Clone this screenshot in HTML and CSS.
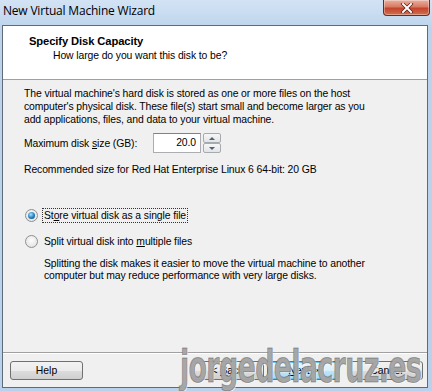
FILE: index.html
```html
<!DOCTYPE html>
<html lang="en">
<head>
  <meta charset="UTF-8">
  <title>New Virtual Machine Wizard</title>
  <link rel="stylesheet" href="styles.css">
</head>
<body>
  <div class="window">
    <div class="titlebar">
      <span class="title">New Virtual Machine Wizard</span>
      <div class="close">
        <svg width="14" height="10" viewBox="0 0 14 10">
          <path d="M3 1 L11 9 M11 1 L3 9" stroke="#5a1a10" stroke-width="3.4" stroke-linecap="square"/>
          <path d="M3 1 L11 9 M11 1 L3 9" stroke="#ffffff" stroke-width="2" stroke-linecap="square"/>
        </svg>
      </div>
    </div>
    <div class="client">
      <div class="header">
        <div class="headTitle">Specify Disk Capacity</div>
        <div class="headSub">How large do you want this disk to be?</div>
      </div>
      <div class="content">
        <p class="intro">The virtual machine's hard disk is stored as one or more files on the host computer's physical disk. These file(s) start small and become larger as you add applications, files, and data to your virtual machine.</p>
        <div class="sizeRow">
          <span class="sizeLabel">Maximum disk <u>s</u>ize (GB):</span>
          <div class="input">20.0</div>
          <div class="spin">
            <div class="spinBtn"><span class="arrUp"></span></div>
            <div class="spinBtn"><span class="arrDown"></span></div>
          </div>
        </div>
        <p class="recommend">Recommended size for Red Hat Enterprise Linux 6 64-bit: 20 GB</p>
        <div class="radioRow first">
          <span class="radio checked"></span>
          <span class="radioLabel focus">St<u>o</u>re virtual disk as a single file</span>
        </div>
        <div class="radioRow">
          <span class="radio"></span>
          <span class="radioLabel">Split virtual disk into <u>m</u>ultiple files</span>
        </div>
        <p class="note">Splitting the disk makes it easier to move the virtual machine to another computer but may reduce performance with very large disks.</p>
      </div>
      <div class="footer">
        <button class="btn help">Help</button>
        <div class="btnGroup">
          <button class="btn">&lt; <u>B</u>ack</button>
          <button class="btn default"><u>N</u>ext &gt;</button>
          <button class="btn cancel">Cancel</button>
        </div>
        <div class="watermark">jorgedelacruz.es</div>
      </div>
    </div>
  </div>
</body>
</html>
```

FILE: styles.css
```css
*{
  box-sizing: border-box;
}
body{
  margin: 0;
  width: 432px;
  height: 391px;
  overflow: hidden;
  background: #b9d1ea;
  font-family: "Liberation Sans", Arial, sans-serif;
  font-size: 10.4px;
  letter-spacing: -0.1px;
  color: #000;
}
.window{
  display: flex;
  flex-direction: column;
  height: 391px;
  background: linear-gradient(#d3e3f5, #bcd3eb 30px, #b9d1ea);
}
.titlebar{
  display: flex;
  height: 25px;
  padding-left: 3px;
}
.title{
  font-family: "Open Sans", "Liberation Sans", sans-serif;
  font-size: 12px;
  letter-spacing: -0.2px;
  line-height: 22px;
}
.close{
  margin-left: auto;
  margin-right: 2px;
  width: 47px;
  height: 16px;
  border: 1px solid #6d2b20;
  border-top: none;
  border-radius: 0 0 4px 4px;
  background: linear-gradient(#eab0a0, #d97a63 45%, #c4442b 55%, #d0704f);
  box-shadow: inset 0 0 0 1px rgba(255, 255, 255, 0.35);
  display: flex;
  align-items: center;
  justify-content: center;
}
.client{
  flex: 1;
  margin: 0 4px 3px 2px;
  border: 1px solid #5e6c7a;
  display: flex;
  flex-direction: column;
  background: #f0f0f0;
}
.header{
  height: 54px;
  background: #fff;
  border-bottom: 1px solid #a0a0a0;
  padding: 8px 0 0 26px;
}
.headTitle{
  font-weight: bold;
  font-size: 11.2px;
  line-height: 14px;
}
.headSub{
  padding-left: 24px;
  line-height: 14px;
  margin-top: 1px;
}
.content{
  flex: 1;
  padding: 7px 0 0 21px;
}
.content p{
  margin: 0;
}
.intro{
  line-height: 13px;
  width: 360px;
}
.sizeRow{
  display: flex;
  align-items: center;
  margin-top: 7px;
  height: 20px;
}
.sizeLabel{
  width: 129px;
}
.input{
  width: 48px;
  height: 20px;
  background: #fff;
  border: 1px solid #abadb3;
  border-top-color: #7f8389;
  text-align: right;
  padding-right: 4px;
  line-height: 18px;
}
.spin{
  margin-left: 2px;
  display: flex;
  flex-direction: column;
}
.spinBtn{
  width: 18px;
  height: 10px;
  border: 1px solid #a7abb0;
  border-radius: 2px;
  background: linear-gradient(#f7f7f7, #e4e4e4);
  display: flex;
  align-items: center;
  justify-content: center;
}
.arrUp, .arrDown{
  width: 0;
  height: 0;
  border-left: 3px solid transparent;
  border-right: 3px solid transparent;
}
.arrUp{
  border-bottom: 3px solid #4d6185;
}
.arrDown{
  border-top: 3px solid #4d6185;
}
.content .recommend{
  margin-top: 10px;
  line-height: 13px;
}
.radioRow{
  display: flex;
  align-items: center;
  margin-top: 10px;
  height: 16px;
}
.radioRow.first{
  margin-top: 31px;
}
.radio{
  width: 13px;
  height: 13px;
  margin-left: 1px;
  border-radius: 50%;
  border: 1px solid #8f8f8f;
  background: radial-gradient(circle at 50% 40%, #fdfdfd, #dcdcdc);
  position: relative;
}
.radio.checked::after{
  content: "";
  position: absolute;
  left: 2px;
  top: 2px;
  width: 7px;
  height: 7px;
  border-radius: 50%;
  background: radial-gradient(circle at 40% 35%, #a8e1ff, #1b75b8 60%, #114b80);
}
.radioLabel{
  margin-left: 4px;
  padding: 1px 1px;
  border: 1px dotted transparent;
}
.radioLabel.focus{
  border-color: #333;
}
.content .note{
  margin: 9px 0 0 20px;
  line-height: 12px;
  width: 350px;
}
.footer{
  position: relative;
  height: 35px;
  border-top: 1px solid #a0a0a0;
  box-shadow: inset 0 1px 0 #fff;
  display: flex;
  align-items: flex-start;
  padding: 8px 4px 0 7px;
}
.btn{
  font-family: "Liberation Sans", Arial, sans-serif;
  font-size: 10.4px;
  width: 73px;
  height: 19px;
  padding: 0;
  border: 1px solid #707070;
  border-radius: 3px;
  background: linear-gradient(#f2f2f2, #ebebeb 50%, #dddddd 51%, #cfcfcf);
  color: #000;
}
.btnGroup{
  margin-left: auto;
  display: flex;
  gap: 3px;
}
.btn.default{
  border-color: #3c7fb1;
  background: linear-gradient(#eaf6fd, #d9f0fc 50%, #bee6fd 51%, #a7d9f5);
  box-shadow: inset 0 0 0 1px #6ec5ea;
}
.btn.cancel{
  margin-left: 7px;
}
.watermark{
  position: absolute;
  left: 177px;
  top: -10px;
  font-family: "DejaVu Sans Condensed", "DejaVu Sans", sans-serif;
  font-weight: bold;
  font-size: 44px;
  line-height: 48px;
  letter-spacing: -1px;
  white-space: nowrap;
  color: rgba(155, 155, 155, 0.9);
  -webkit-text-stroke: 1px rgba(80, 80, 80, 0.45);
  text-shadow: 1px 1px 0 rgba(255, 255, 255, 0.8);
  transform: scaleX(0.68);
  transform-origin: left top;
  pointer-events: none;
}
```
